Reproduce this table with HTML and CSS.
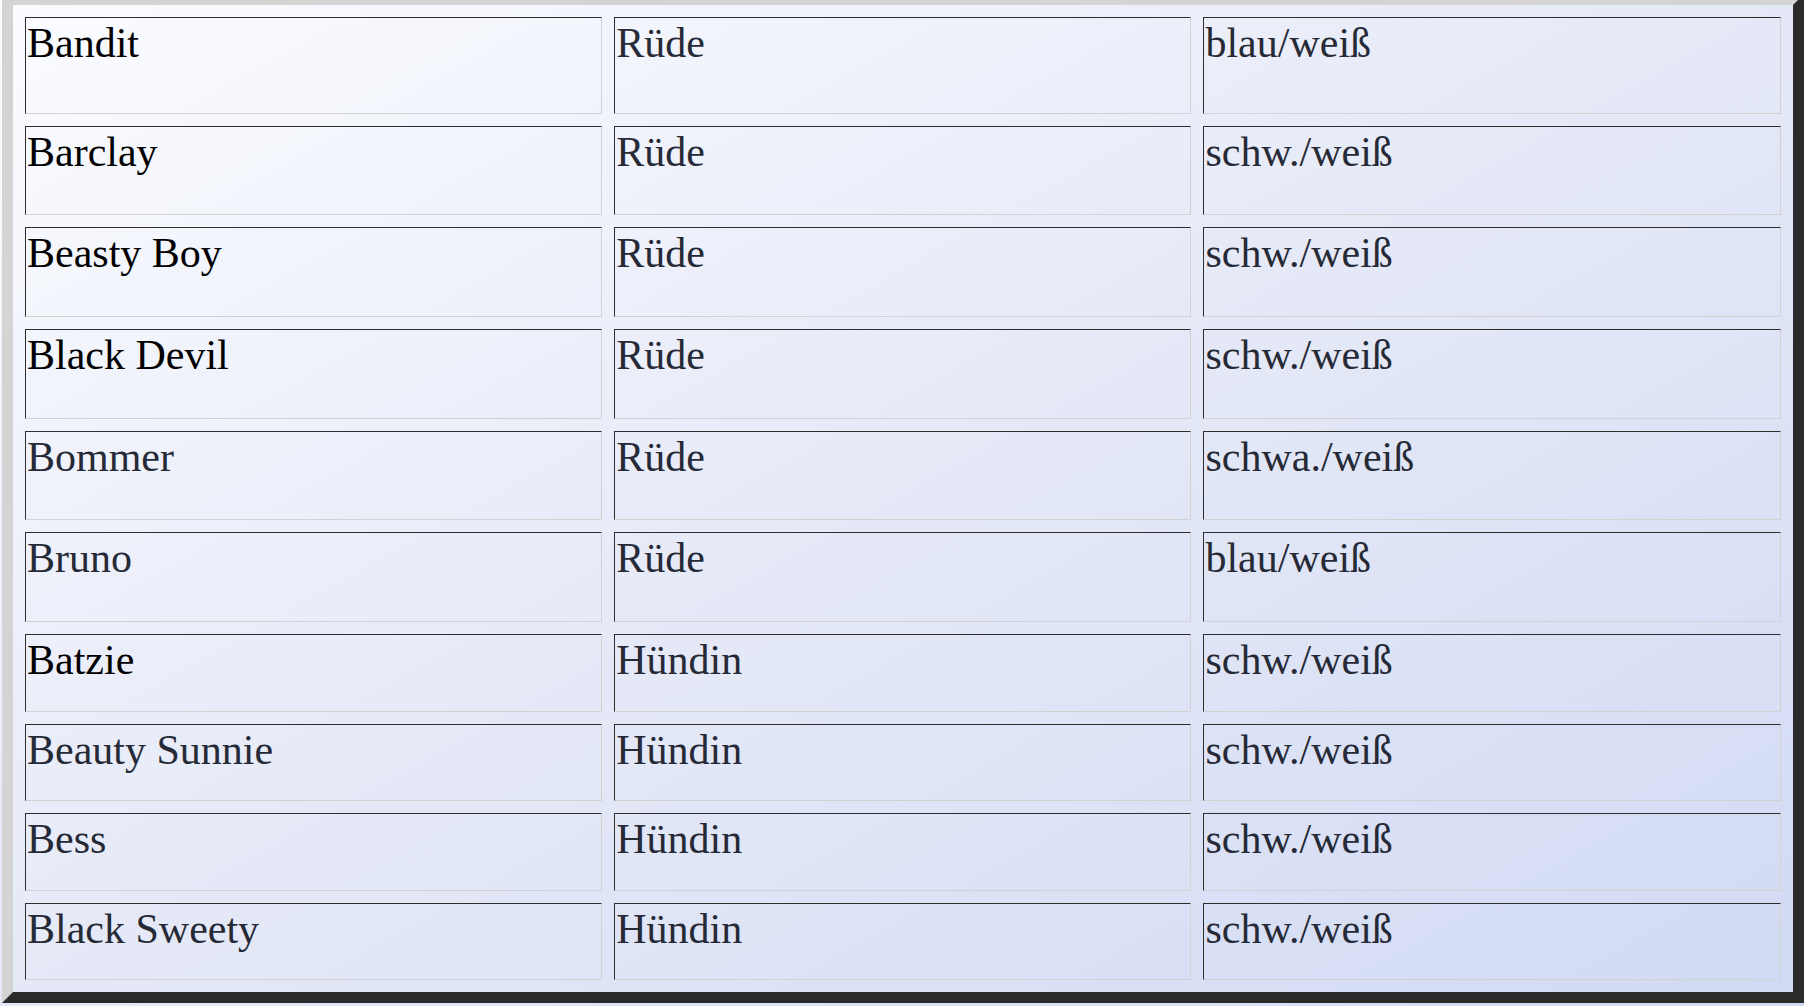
FILE: index.html
```html
<!DOCTYPE html>
<html lang="de">
<head>
<meta charset="utf-8">
<title>Hunde</title>
<link rel="stylesheet" href="styles.css">
</head>
<body>
<table class="dogs">
  <tbody>
    <tr class="row-tall"><td class="dark">Bandit</td><td>Rüde</td><td>blau/weiß</td></tr>
    <tr class="row-mid"><td class="dark">Barclay</td><td>Rüde</td><td>schw./weiß</td></tr>
    <tr class="row-mid"><td class="dark">Beasty Boy</td><td>Rüde</td><td>schw./weiß</td></tr>
    <tr class="row-mid"><td class="dark">Black Devil</td><td>Rüde</td><td>schw./weiß</td></tr>
    <tr class="row-mid"><td>Bommer</td><td>Rüde</td><td>schwa./weiß</td></tr>
    <tr class="row-mid"><td>Bruno</td><td>Rüde</td><td>blau/weiß</td></tr>
    <tr class="row-short"><td class="dark">Batzie</td><td>Hündin</td><td>schw./weiß</td></tr>
    <tr class="row-short"><td>Beauty Sunnie</td><td>Hündin</td><td>schw./weiß</td></tr>
    <tr class="row-short"><td>Bess</td><td>Hündin</td><td>schw./weiß</td></tr>
    <tr class="row-short"><td>Black Sweety</td><td>Hündin</td><td>schw./weiß</td></tr>
  </tbody>
</table>
</body>
</html>
```

FILE: styles.css
```css
html {
  overflow: hidden;
  min-height: 100%;
  background: linear-gradient(to bottom right, #fbfcff 0%, #e5e9f7 50%, #d1daf4 100%);
}

body {
  margin: 0;
  min-height: 1006px;
  font-family: "Liberation Serif", "Times New Roman", serif;
}

.dogs {
  margin: -6.5px 0 0 2px;
  border-collapse: separate;
  border-spacing: 12.5px;
  border-style: solid;
  border-width: 11px;
  border-color: #d4d4d4 #2a2a2a #2a2a2a #d4d4d4;
  background: transparent;
}

.dogs td {
  width: 575px;
  padding: 1px;
  vertical-align: top;
  text-align: left;
  font-size: 42px;
  line-height: 48px;
  color: #262a36;
  border-style: solid;
  border-width: 1px;
  border-color: #2e2e2e #d2d2d2 #d2d2d2 #2e2e2e;
}

.dogs td.dark {
  color: #000;
}

.row-tall td {
  height: 93px;
}

.row-mid td {
  height: 85.7px;
}

.row-short td {
  height: 73.6px;
}
```
